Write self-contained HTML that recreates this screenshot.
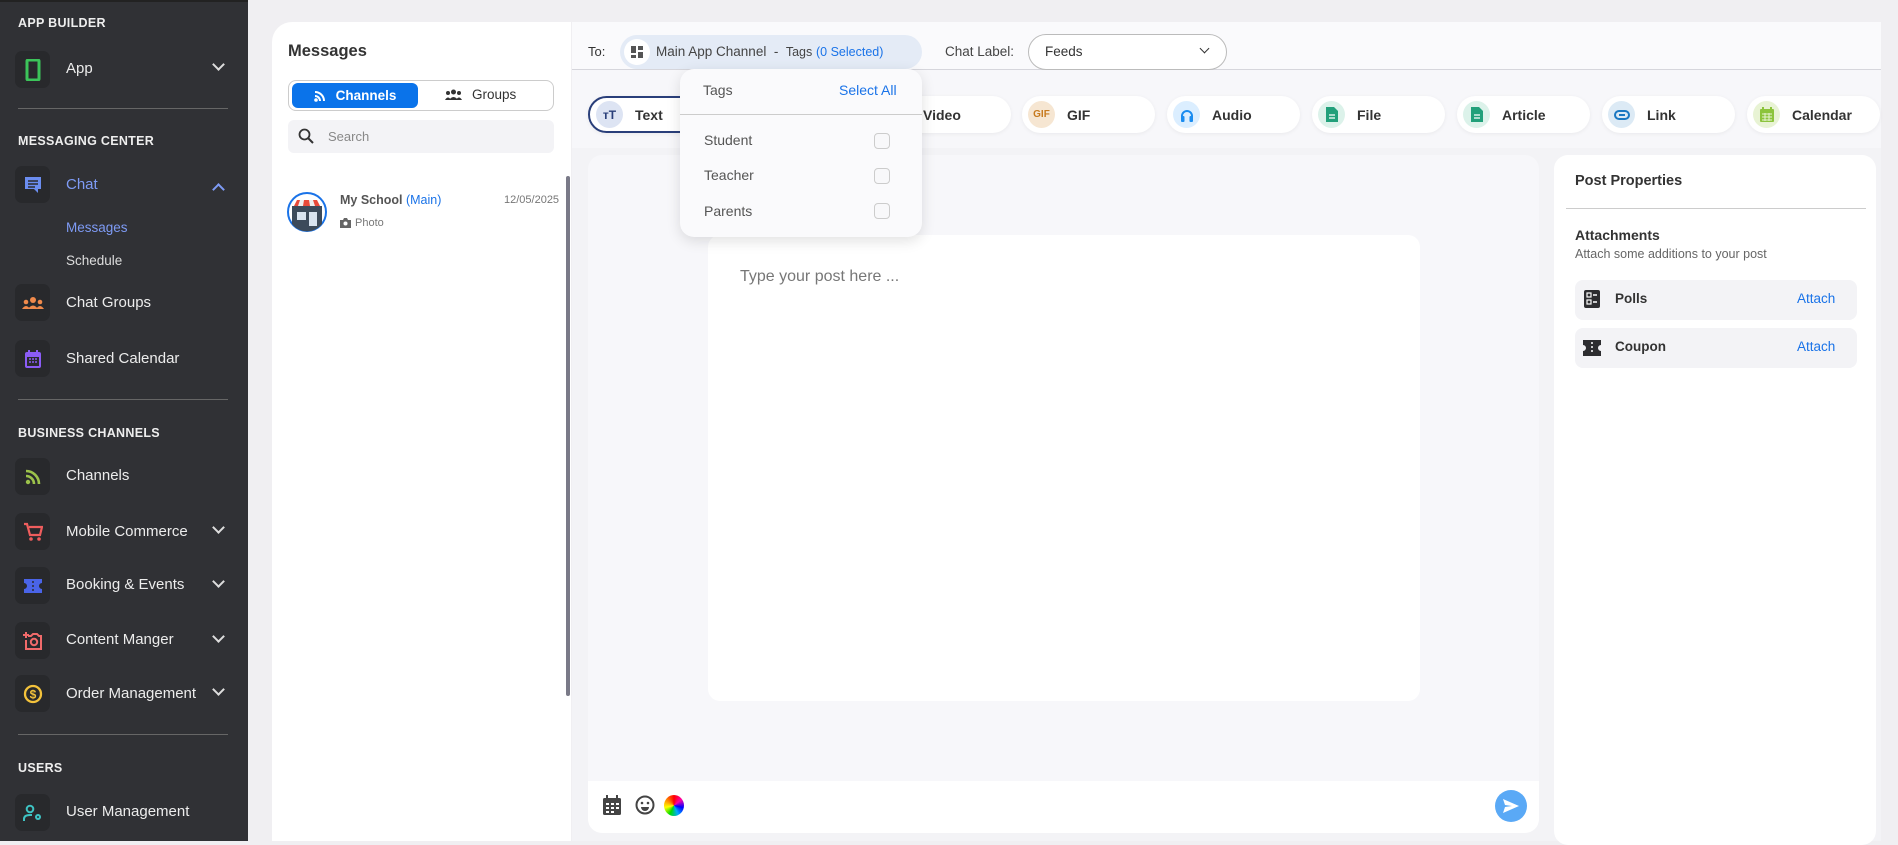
<!DOCTYPE html>
<html><head><meta charset="utf-8"><style>
*{box-sizing:border-box;margin:0;padding:0}
body{width:1898px;height:841px;overflow:hidden;background:#f0eff2;font-family:"Liberation Sans",sans-serif;position:relative;color:#333}
.a{position:absolute}
#sb{left:0;top:0;width:248px;height:841px;background:#303135;border-top:2px solid #222}
.sh{position:absolute;left:18px;color:#eee;font-weight:bold;font-size:12.5px;letter-spacing:.3px}
.ib{position:absolute;left:15px;width:35px;height:37px;border-radius:7px;background:#28292c;display:flex;align-items:center;justify-content:center}
.it{position:absolute;left:66px;color:#ececec;font-size:15px}
.ch{position:absolute;left:214px;width:9px;height:9px;border-right:2px solid #ddd;border-bottom:2px solid #ddd;transform:rotate(45deg)}
.dv{position:absolute;left:18px;width:210px;height:1px;background:#666}
.pill{position:absolute;top:96px;width:133px;height:37px;border-radius:19px;background:#fff;box-shadow:0 1px 4px rgba(0,0,0,.06);display:flex;align-items:center;padding-left:6px;font-size:14px;font-weight:bold;color:#333}
.pc{width:27px;height:27px;border-radius:50%;display:flex;align-items:center;justify-content:center;margin-right:12px;font-size:10px;font-weight:bold}
.cb{position:absolute;left:874px;width:16px;height:16px;border:1px solid #ccc;border-radius:4px;background:#f8f8fa}
.dl{position:absolute;left:704px;font-size:14px;color:#555}
</style></head><body>
<div id="sb" class="a">
<div class="sh" style="top:14px">APP BUILDER</div>
<div class="ib" style="top:49px"><svg width="16" height="22"><rect x="2" y="1" width="12" height="20" rx="1" fill="none" stroke="#3cc45a" stroke-width="3"/></svg></div>
<div class="it" style="top:58px">App</div><div class="ch" style="top:58px"></div>
<div class="dv" style="top:106px"></div>
<div class="sh" style="top:132px">MESSAGING CENTER</div>
<div class="ib" style="top:164px"><svg width="20" height="20"><path d="M2 2h16v12h-3v4l-4-4H2z" fill="#6b8df0"/><path d="M5 6h10M5 9h10M5 12h7" stroke="#2a2b2e" stroke-width="1.4"/></svg></div>
<div class="it" style="top:174px;color:#7e9bf5">Chat</div><div class="ch" style="top:183px;transform:rotate(-135deg);border-color:#7e9bf5"></div>
<div class="it" style="top:218px;font-size:13.5px;color:#7e9bf5">Messages</div>
<div class="it" style="top:251px;font-size:13.5px;color:#ddd">Schedule</div>
<div class="ib" style="top:282px"><svg width="22" height="14"><circle cx="11" cy="4" r="3" fill="#f08a4b"/><circle cx="4" cy="6" r="2.3" fill="#f08a4b"/><circle cx="18" cy="6" r="2.3" fill="#f08a4b"/><path d="M0 13q4-6 8 0M6 13q5-7 10 0M14 13q4-6 8 0" fill="#f08a4b"/></svg></div>
<div class="it" style="top:292px">Chat Groups</div>
<div class="ib" style="top:338px"><svg width="18" height="20"><rect x="1" y="3" width="16" height="16" rx="2" fill="#8b5cf6"/><path d="M5 1v4M13 1v4" stroke="#8b5cf6" stroke-width="2"/><rect x="3" y="8" width="12" height="9" fill="#2a2b2e"/><path d="M5 10h2M8 10h2M11 10h2M5 13h2M8 13h2M11 13h2" stroke="#8b5cf6" stroke-width="1.5"/></svg></div>
<div class="it" style="top:348px">Shared Calendar</div>
<div class="dv" style="top:397px"></div>
<div class="sh" style="top:424px">BUSINESS CHANNELS</div>
<div class="ib" style="top:456px"><svg width="16" height="16"><circle cx="3" cy="13" r="2.2" fill="#9cc24b"/><path d="M1 7a8 8 0 0 1 8 8M1 2a13 13 0 0 1 13 13" stroke="#9cc24b" stroke-width="2.6" fill="none"/></svg></div>
<div class="it" style="top:465px">Channels</div>
<div class="ib" style="top:511px"><svg width="20" height="20"><path d="M1 2h3l3 11h10l2-8H6" stroke="#ef5d5d" stroke-width="2.2" fill="none"/><circle cx="8" cy="17" r="1.8" fill="#ef5d5d"/><circle cx="16" cy="17" r="1.8" fill="#ef5d5d"/></svg></div>
<div class="it" style="top:521px">Mobile Commerce</div><div class="ch" style="top:521px"></div>
<div class="ib" style="top:565px"><svg width="20" height="16"><path d="M1 1h18v4a3 3 0 0 0 0 6v4H1v-4a3 3 0 0 0 0-6z" fill="#4a64e8"/><path d="M10 3v10" stroke="#2a2b2e" stroke-width="1.5" stroke-dasharray="2 2"/></svg></div>
<div class="it" style="top:574px">Booking &amp; Events</div><div class="ch" style="top:575px"></div>
<div class="ib" style="top:620px"><svg width="20" height="20"><path d="M5 5h3l2-2h4l2 2h2v13H3V9" stroke="#f06a6a" stroke-width="2" fill="none"/><circle cx="11" cy="11" r="3.2" stroke="#f06a6a" stroke-width="2" fill="none"/><path d="M3 1v6M0 4h6" stroke="#f06a6a" stroke-width="2"/></svg></div>
<div class="it" style="top:629px">Content Manger</div><div class="ch" style="top:630px"></div>
<div class="ib" style="top:673px"><svg width="20" height="20"><circle cx="10" cy="10" r="8" stroke="#f3c23b" stroke-width="2.3" fill="none"/><text x="10" y="14.5" text-anchor="middle" font-size="12" font-weight="bold" fill="#f3c23b" font-family="Liberation Sans">$</text></svg></div>
<div class="it" style="top:683px">Order Management</div><div class="ch" style="top:683px"></div>
<div class="dv" style="top:732px"></div>
<div class="sh" style="top:759px">USERS</div>
<div class="ib" style="top:792px"><svg width="20" height="18"><circle cx="7" cy="5" r="3.3" stroke="#3ec4c4" stroke-width="2" fill="none"/><path d="M1 17v-2q0-4 6-4h2" stroke="#3ec4c4" stroke-width="2" fill="none"/><circle cx="15" cy="13" r="3" fill="#3ec4c4"/><circle cx="15" cy="13" r="1" fill="#2a2b2e"/></svg></div>
<div class="it" style="top:801px">User Management</div>
</div>

<!-- Messages panel -->
<div class="a" style="left:272px;top:22px;width:299px;height:819px;background:#fff;border-radius:20px 0 0 0"></div>
<div class="a" style="left:288px;top:42px;font-size:16.5px;font-weight:bold;color:#333">Messages</div>
<div class="a" style="left:288px;top:80px;width:266px;height:31px;border:1px solid #ccc;border-radius:8px;background:#fff"></div>
<div class="a" style="left:292px;top:83px;width:126px;height:25px;background:#0a73ea;border-radius:6px;color:#fff;font-size:13.5px;font-weight:bold;display:flex;align-items:center;justify-content:center"><svg width="12" height="12" style="margin-right:10px"><circle cx="2" cy="10" r="1.8" fill="#fff"/><path d="M1 6a5 5 0 0 1 5 5M1 2a9 9 0 0 1 9 9" stroke="#fff" stroke-width="2" fill="none"/></svg>Channels</div>
<div class="a" style="left:445px;top:87px;font-size:13.5px;color:#333;display:flex;align-items:center"><svg width="17" height="11" style="margin-right:10px"><circle cx="8.5" cy="3" r="2.5" fill="#333"/><circle cx="3" cy="4" r="2" fill="#333"/><circle cx="14" cy="4" r="2" fill="#333"/><path d="M0 11q3-5 6 0M4 11q4.5-6 9 0M11 11q3-5 6 0" fill="#333"/></svg>Groups</div>
<div class="a" style="left:288px;top:120px;width:266px;height:33px;background:#f3f3f6;border-radius:6px"></div>
<svg class="a" style="left:298px;top:128px" width="16" height="16"><circle cx="6.5" cy="6.5" r="5" stroke="#333" stroke-width="1.8" fill="none"/><path d="M10 10l5 5" stroke="#333" stroke-width="2"/></svg>
<div class="a" style="left:328px;top:129px;font-size:13px;color:#888">Search</div>
<svg class="a" style="left:287px;top:192px" width="40" height="40"><circle cx="20" cy="20" r="19" fill="#fff" stroke="#1a73e8" stroke-width="2"/><path d="M5 24V14h30v10" fill="#3c4a5a"/><path d="M7 14l3-6h20l3 6z" fill="#e84a3a"/><path d="M13 8l-2 6h5l1-6zM22 8l1 6h5l-2-6z" fill="#eee"/><path d="M5 20h30v12a19 19 0 0 1-30 0z" fill="#3c4a5a"/><rect x="10" y="20" width="9" height="8" fill="#d8e3ef"/><rect x="22" y="20" width="8" height="14" fill="#d8e3ef"/></svg>
<div class="a" style="left:340px;top:193px;font-size:12.5px;font-weight:bold;color:#555">My School <span style="color:#1a73e8;font-weight:normal">(Main)</span></div>
<div class="a" style="left:504px;top:194px;font-size:11px;color:#777">12/05/2025</div>
<svg class="a" style="left:340px;top:218px" width="11" height="10"><path d="M0 2h3l1-2h3l1 2h3v8H0z" fill="#666"/><circle cx="5.5" cy="5.5" r="2" fill="#fff"/></svg>
<div class="a" style="left:355px;top:217px;font-size:11px;color:#777">Photo</div>
<div class="a" style="left:566px;top:176px;width:4px;height:520px;background:#7a7a88;border-radius:2px"></div>

<!-- compose -->
<div class="a" style="left:572px;top:22px;width:1309px;height:47px;background:#fafafc"></div>
<div class="a" style="left:572px;top:69px;width:1309px;height:1px;background:#d6d6dc"></div>
<div class="a" style="left:572px;top:70px;width:1309px;height:78px;background:#f7f7fa"></div>
<div class="a" style="left:572px;top:148px;width:1309px;height:693px;background:#f3f3f6"></div>
<div class="a" style="left:588px;top:44px;font-size:13px;color:#333">To:</div>
<div class="a" style="left:620px;top:35px;width:302px;height:34px;background:#e4ebf6;border-radius:17px"></div>
<div class="a" style="left:624px;top:39px;width:26px;height:26px;border-radius:50%;background:#fff"></div>
<svg class="a" style="left:631px;top:46px" width="12" height="12"><rect x="0" y="0" width="5" height="7" fill="#555"/><rect x="7" y="0" width="5" height="4" fill="#555"/><rect x="0" y="9" width="5" height="3" fill="#555"/><rect x="7" y="6" width="5" height="6" fill="#555"/></svg>
<div class="a" style="left:656px;top:44px;font-size:13.5px;color:#444;white-space:nowrap">Main App Channel &nbsp;- &nbsp;<span style="font-size:12.5px">Tags</span> <span style="color:#1a73e8;font-size:12.5px">(0 Selected)</span></div>
<div class="a" style="left:945px;top:44px;font-size:13.5px;color:#444">Chat Label:</div>
<div class="a" style="left:1028px;top:34px;width:199px;height:36px;border:1px solid #bbb;border-radius:18px;background:#fff"></div>
<div class="a" style="left:1045px;top:44px;font-size:13.5px;color:#333">Feeds</div>
<div class="a" style="left:1201px;top:45px;width:7px;height:7px;border-right:1.5px solid #333;border-bottom:1.5px solid #333;transform:rotate(45deg)"></div>

<!-- pills -->
<div class="pill" style="left:588px;border:2px solid #2a3f7a;padding-left:6px"><div class="pc" style="background:#dde4f3;color:#2a3f7a;font-size:12px">тT</div>Text</div>
<div class="pill" style="left:733px"></div>
<div class="pill" style="left:878px"><div class="pc" style="background:#eee"></div>Video</div>
<div class="pill" style="left:1022px"><div class="pc" style="background:#f6e6d2;color:#c77a1e">GIF</div>GIF</div>
<div class="pill" style="left:1167px"><div class="pc" style="background:#dbeeff"><svg width="14" height="14"><path d="M2 12V8a5 5 0 0 1 10 0v4" stroke="#1a8cf0" stroke-width="2" fill="none"/><rect x="1" y="8" width="3.5" height="6" rx="1" fill="#1a8cf0"/><rect x="9.5" y="8" width="3.5" height="6" rx="1" fill="#1a8cf0"/></svg></div>Audio</div>
<div class="pill" style="left:1312px"><div class="pc" style="background:#dcf2ea"><svg width="12" height="15"><path d="M0 0h8l4 4v11H0z" fill="#22a07a"/><path d="M3 8h6M3 11h6" stroke="#fff" stroke-width="1.3"/></svg></div>File</div>
<div class="pill" style="left:1457px"><div class="pc" style="background:#dcf2ea"><svg width="12" height="15"><path d="M0 0h8l4 4v11H0z" fill="#22a07a"/><path d="M3 8h6M3 11h6" stroke="#fff" stroke-width="1.3"/></svg></div>Article</div>
<div class="pill" style="left:1602px"><div class="pc" style="background:#dceaf5"><svg width="16" height="10"><rect x="1" y="1" width="14" height="8" rx="4" stroke="#1a78c2" stroke-width="2" fill="none"/><path d="M5 5h6" stroke="#1a78c2" stroke-width="2"/></svg></div>Link</div>
<div class="pill" style="left:1747px"><div class="pc" style="background:#e8f3d4"><svg width="14" height="15"><rect x="0" y="2" width="14" height="13" rx="1" fill="#8cc43c"/><path d="M3 0v3M11 0v3" stroke="#8cc43c" stroke-width="2"/><path d="M2 7h10M2 10h10M2 13h10M5 6v8M9 6v8" stroke="#e8f3d4" stroke-width="1"/></svg></div>Calendar</div>

<!-- editor -->
<div class="a" style="left:588px;top:155px;width:951px;height:678px;background:#f7f7fa;border-radius:14px;overflow:hidden">
<div class="a" style="left:0;top:626px;width:951px;height:52px;background:#fff"></div></div>
<div class="a" style="left:708px;top:235px;width:712px;height:466px;background:#fff;border-radius:12px"></div>
<div class="a" style="left:740px;top:268px;font-size:16px;color:#777">Type your post here ...</div>
<svg class="a" style="left:603px;top:795px" width="19" height="20"><rect x="0" y="3" width="18" height="17" rx="1.5" fill="#444"/><path d="M4 0v5M14 0v5" stroke="#444" stroke-width="2"/><path d="M3 9h3M8 9h3M13 9h3M3 13h3M8 13h3M13 13h3M3 17h3M8 17h3" stroke="#fff" stroke-width="2"/></svg>
<svg class="a" style="left:635px;top:795px" width="20" height="20"><circle cx="10" cy="10" r="8.5" stroke="#444" stroke-width="2" fill="none"/><circle cx="7" cy="8" r="1.3" fill="#444"/><circle cx="13" cy="8" r="1.3" fill="#444"/><path d="M6 12a4 4 0 0 0 8 0z" fill="#444"/></svg>
<div class="a" style="left:664px;top:795px;width:20px;height:21px;border-radius:50%;background:conic-gradient(#f00,#f0a,#00f,#0af,#0d0,#ff0,#f80,#f00)"></div>
<div class="a" style="left:1495px;top:790px;width:32px;height:32px;border-radius:50%;background:#5aa9f6"></div>
<svg class="a" style="left:1503px;top:799px" width="16" height="14"><path d="M0 0l16 7-16 7 2-6 7-1-7-1z" fill="#fff"/></svg>

<!-- post properties -->
<div class="a" style="left:1554px;top:155px;width:322px;height:690px;background:#fff;border-radius:14px"></div>
<div class="a" style="left:1575px;top:173px;font-size:14.5px;font-weight:bold;color:#333">Post Properties</div>
<div class="a" style="left:1566px;top:208px;width:300px;height:1px;background:#ccc"></div>
<div class="a" style="left:1575px;top:227px;font-size:14px;font-weight:bold;color:#333">Attachments</div>
<div class="a" style="left:1575px;top:247px;font-size:12.5px;color:#666">Attach some additions to your post</div>
<div class="a" style="left:1575px;top:280px;width:282px;height:40px;background:#f3f3f6;border-radius:8px"></div>
<div class="a" style="left:1575px;top:328px;width:282px;height:40px;background:#f3f3f6;border-radius:8px"></div>
<svg class="a" style="left:1584px;top:290px" width="16" height="18"><rect width="16" height="18" rx="2" fill="#2d2d30"/><rect x="3" y="3" width="4" height="4" fill="none" stroke="#fff" stroke-width="1.2"/><rect x="3" y="10" width="4" height="4" fill="none" stroke="#fff" stroke-width="1.2"/><path d="M9 5h4M9 12h4" stroke="#fff" stroke-width="1.4"/></svg>
<div class="a" style="left:1615px;top:291px;font-size:13.5px;font-weight:bold;color:#333">Polls</div>
<div class="a" style="left:1797px;top:291px;font-size:13.5px;color:#1a73e8">Attach</div>
<svg class="a" style="left:1583px;top:340px" width="18" height="16"><path d="M0 0h18v5a3 3 0 0 0 0 6v5H0v-5a3 3 0 0 0 0-6z" fill="#2d2d30"/><path d="M9 2v12" stroke="#fff" stroke-width="1.5" stroke-dasharray="2 2"/></svg>
<div class="a" style="left:1615px;top:339px;font-size:13.5px;font-weight:bold;color:#333">Coupon</div>
<div class="a" style="left:1797px;top:339px;font-size:13.5px;color:#1a73e8">Attach</div>

<!-- dropdown -->
<div class="a" style="left:680px;top:69px;width:242px;height:168px;background:#fafafc;border-radius:14px;box-shadow:0 4px 14px rgba(0,0,0,.12)"></div>
<div class="a" style="left:703px;top:82px;font-size:14px;color:#555">Tags</div>
<div class="a" style="left:839px;top:82px;font-size:14px;color:#1a73e8">Select All</div>
<div class="a" style="left:680px;top:114px;width:242px;height:1px;background:#ccc"></div>
<div class="dl" style="top:132px">Student</div><div class="cb" style="top:133px"></div>
<div class="dl" style="top:167px">Teacher</div><div class="cb" style="top:168px"></div>
<div class="dl" style="top:203px">Parents</div><div class="cb" style="top:203px"></div>
</body></html>
